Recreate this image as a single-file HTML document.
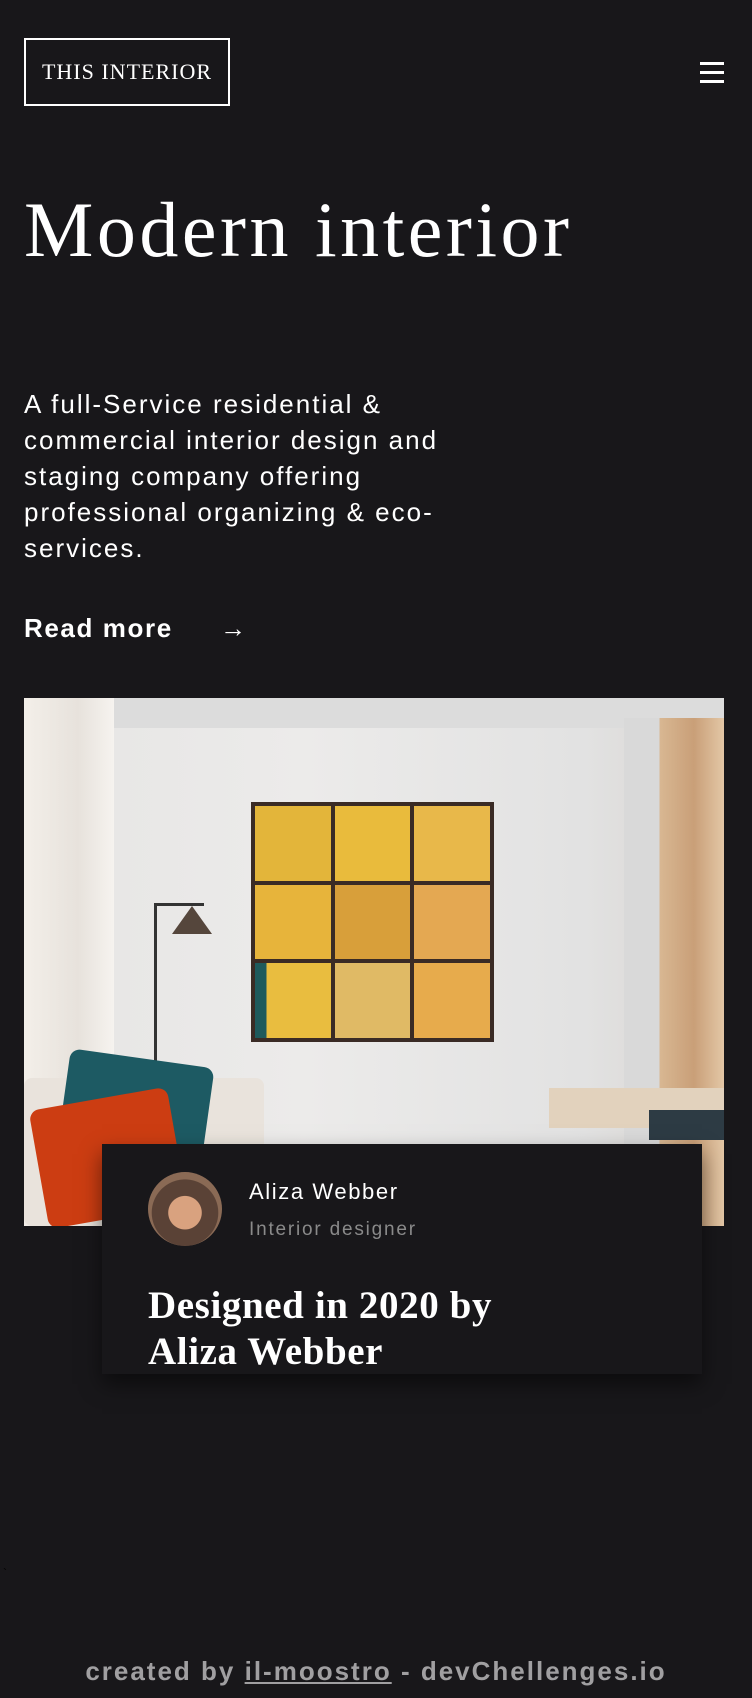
<!DOCTYPE html>
<html><head><meta charset="utf-8">
<style>
*{margin:0;padding:0;box-sizing:border-box}
html,body{width:752px;height:1698px;background:#18171a;overflow:hidden}
body{position:relative;font-family:"Liberation Sans",sans-serif;color:#fff}
.abs{position:absolute}
.logo{left:24px;top:38px;width:206px;height:68px;border:2px solid #fff;font-family:"Liberation Serif",serif;font-size:22px;display:flex;align-items:center;justify-content:center;letter-spacing:1px}
.burger{left:700px;top:60px;width:24px;height:24px}
.burger i{position:absolute;left:0;width:24px;height:2.5px;background:#fff}
h1{position:absolute;left:24px;top:180px;font-family:"Liberation Serif",serif;font-weight:400;font-size:78px;letter-spacing:3.5px;line-height:100px;white-space:nowrap}
.p{left:24px;top:386px;font-size:26px;line-height:36px;letter-spacing:2px;white-space:nowrap}
.rm{left:24px;top:610px;font-size:26px;font-weight:bold;line-height:36px;letter-spacing:1.6px}
.arr{left:220px;top:610px;font-size:26px;line-height:36px}
.img{left:24px;top:698px;width:700px;height:528px;overflow:hidden;background:linear-gradient(90deg,#e6e5e4 0%,#ecebea 40%,#e2e2e2 80%,#d8d4cf 100%)}
.card{left:102px;top:1144px;width:600px;height:230px;background:#18171a;box-shadow:0 10px 20px rgba(0,0,0,.5)}
.av{left:148px;top:1172px;width:74px;height:74px;border-radius:50%;overflow:hidden;background:radial-gradient(circle at 50% 55%,#d9a27f 0 30%,#5a4236 31% 60%,#8a6a55 61%)}
.name{left:249px;top:1178px;font-size:22px;line-height:28px;letter-spacing:1.6px}
.role{left:249px;top:1217px;font-size:19px;color:#8a8a8a;line-height:26px;letter-spacing:1.8px}
.h2{left:148px;top:1283px;font-family:"Liberation Serif",serif;font-weight:bold;font-size:39px;letter-spacing:.6px;line-height:46px;white-space:nowrap}
.foot{left:0;width:752px;top:1655px;text-align:center;font-size:26px;font-weight:bold;color:#a09fa1;line-height:32px;letter-spacing:2px}
.foot u{text-decoration:underline}
</style></head><body>
<div class="abs logo">THIS INTERIOR</div>
<div class="abs burger"><i style="top:2px"></i><i style="top:11px"></i><i style="top:20px"></i></div>
<h1>Modern interior</h1>
<div class="abs p">A full-Service residential &amp;<br>commercial interior design and<br>staging company offering<br>professional organizing &amp; eco-<br>services.</div>
<div class="abs rm">Read more</div>
<div class="abs arr">→</div>
<div class="abs img">
 <div class="abs" style="left:0;top:0;width:700px;height:30px;background:#dcdcdc"></div>
 <div class="abs" style="left:0;top:0;width:90px;height:528px;background:linear-gradient(90deg,#f3efe9,#e7e2dc 60%,#f6f3ef)"></div>
 <div class="abs" style="left:600px;top:20px;width:100px;height:508px;background:linear-gradient(90deg,#d9d9d9 0 35%,#d8b792 36%,#c99f78 70%,#e3c7a6)"></div>
 <div class="abs" style="left:227px;top:104px;width:243px;height:240px;background:#3a2b25;padding:4px;display:grid;grid-template-columns:repeat(3,1fr);grid-template-rows:repeat(3,1fr);gap:4px">
  <div style="background:#e3b53a"></div><div style="background:#e9bb3c"></div><div style="background:#e8b84a"></div>
  <div style="background:#e7b43b"></div><div style="background:#d89f3a"></div><div style="background:#e4a852"></div>
  <div style="background:linear-gradient(90deg,#1e5a5c 15%,#e9bd3f 15%)"></div><div style="background:#e0ba65"></div><div style="background:#e7ab4c"></div>
 </div>
 <div class="abs" style="left:130px;top:205px;width:3px;height:170px;background:#333"></div>
 <div class="abs" style="left:130px;top:205px;width:50px;height:3px;background:#333"></div>
 <div class="abs" style="left:148px;top:208px;width:0;height:0;border-left:20px solid transparent;border-right:20px solid transparent;border-bottom:28px solid #55463c"></div>
 <div class="abs" style="left:0;top:380px;width:240px;height:148px;background:#e9e3dc;border-radius:8px"></div>
 <div class="abs" style="left:40px;top:360px;width:145px;height:90px;background:#1d5a63;transform:rotate(8deg);border-radius:10px"></div>
 <div class="abs" style="left:14px;top:400px;width:140px;height:120px;background:#cc3d12;transform:rotate(-10deg);border-radius:10px"></div>
 <div class="abs" style="left:525px;top:390px;width:175px;height:40px;background:#e2d2bd"></div>
 <div class="abs" style="left:625px;top:412px;width:75px;height:30px;background:#2d3b44"></div>
</div>
<div class="abs card"></div>
<div class="abs av"></div>
<div class="abs name">Aliza Webber</div>
<div class="abs role">Interior designer</div>
<div class="abs h2">Designed in 2020 by<br>Aliza Webber</div>
<div class="abs" style="left:3px;top:1566px;font-size:12px;color:#000">`</div>
<div class="abs foot">created by <u>il-moostro</u> - devChellenges.io</div>
</body></html>
